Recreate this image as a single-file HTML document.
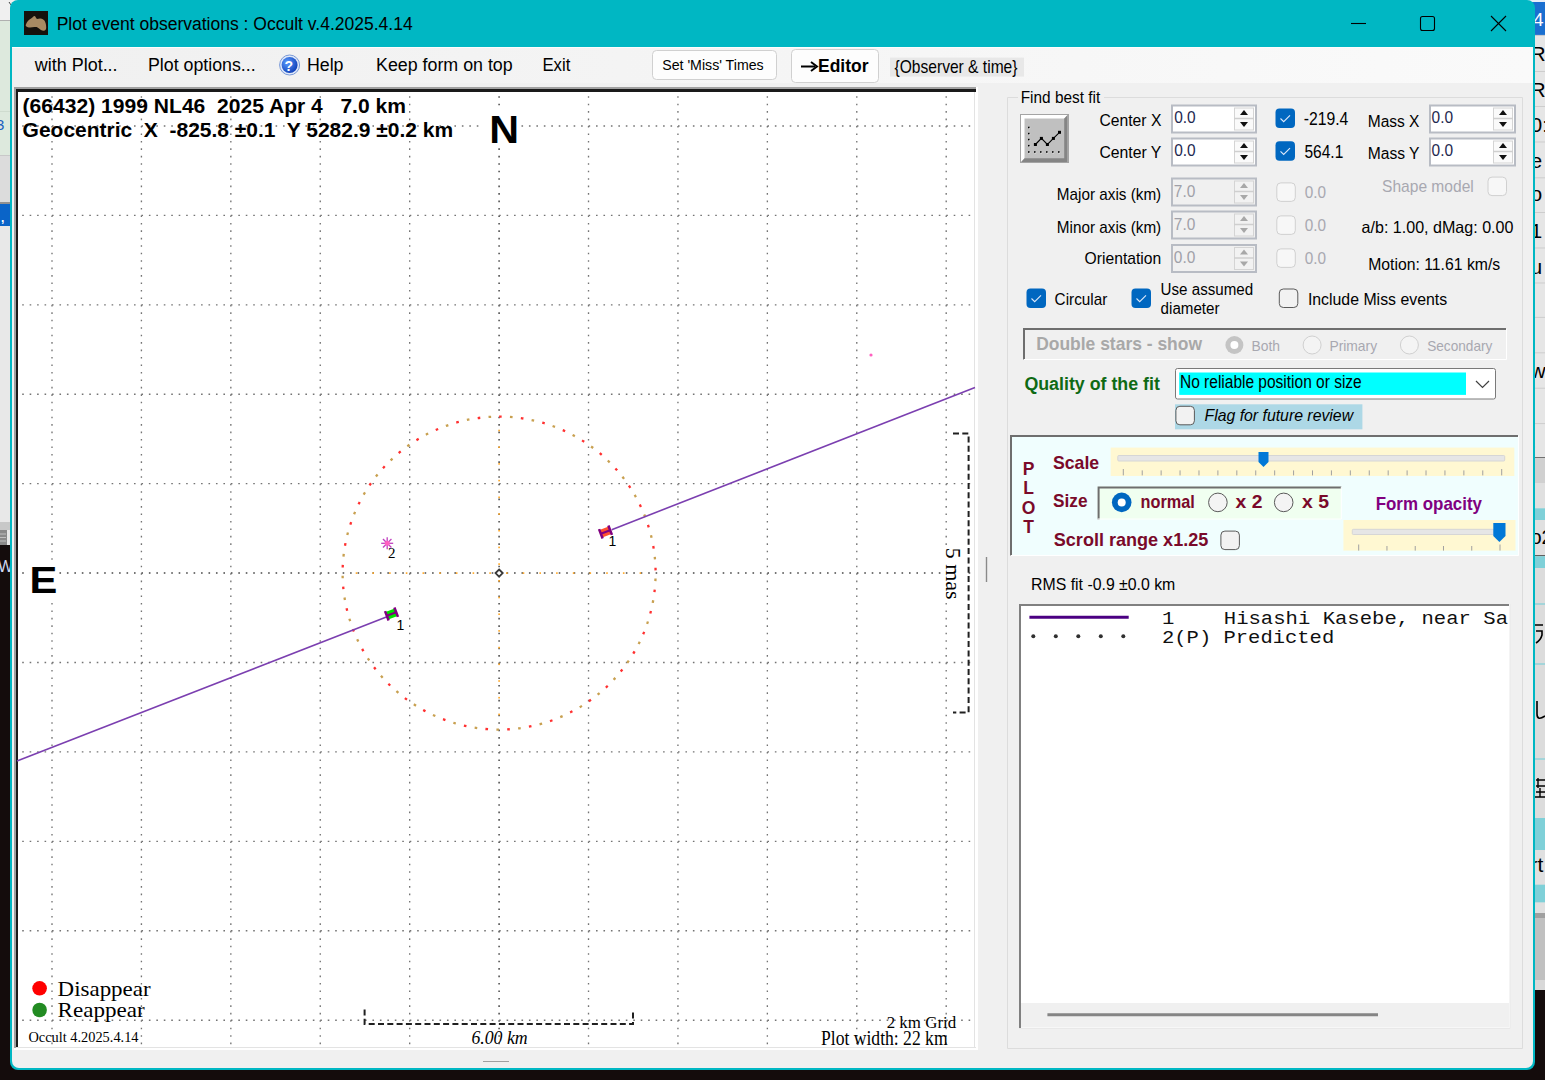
<!DOCTYPE html>
<html><head><meta charset="utf-8"><title>Plot event observations</title>
<style>html,body{margin:0;padding:0;background:#140c0c;}body{width:1545px;height:1080px;overflow:hidden;}svg{display:block;}</style>
</head><body>
<svg width="1545" height="1080" viewBox="0 0 1545 1080" style="white-space:pre">
<rect x="0" y="0" width="1545" height="1080" fill="#140c0c" />
<rect x="0" y="0" width="12" height="545" fill="#e8e8e8" />
<rect x="0" y="0" width="22" height="20" fill="#f0f0f0" />
<line x1="9" y1="2" x2="11" y2="5" stroke="#404040" stroke-width="1" />
<rect x="0" y="20" width="12" height="135" fill="#dde9dd" />
<line x1="0" y1="20.5" x2="12" y2="20.5" stroke="#b0b0b0" stroke-width="1" />
<line x1="0" y1="111.5" x2="12" y2="111.5" stroke="#cfdccf" stroke-width="1" />
<text x="-4" y="130" font-family="'Liberation Sans', sans-serif" font-size="15" font-weight="400" font-style="normal" fill="#2060c0" xml:space="preserve" >3</text>
<rect x="0" y="155" width="12" height="47" fill="#dcdcdc" />
<line x1="0" y1="155.5" x2="12" y2="155.5" stroke="#c8c8c8" stroke-width="1" />
<rect x="0" y="202" width="12" height="2" fill="#909090" />
<rect x="0" y="204" width="12" height="22" fill="#0a64c8" />
<text x="1" y="222" font-family="'Liberation Sans', sans-serif" font-size="12" font-weight="700" font-style="normal" fill="#ffffff" xml:space="preserve" >,</text>
<rect x="0" y="522" width="12" height="8" fill="#c8c8c8" />
<rect x="0" y="530" width="7" height="15" fill="#8a8a8a" />
<line x1="0" y1="534" x2="6" y2="534" stroke="#c0c0c0" stroke-width="1" />
<line x1="0" y1="537.5" x2="6" y2="537.5" stroke="#c0c0c0" stroke-width="1" />
<line x1="0" y1="541" x2="6" y2="541" stroke="#c0c0c0" stroke-width="1" />
<text x="-2" y="572" font-family="'Liberation Sans', sans-serif" font-size="16" font-weight="400" font-style="normal" fill="#d0d8f0" xml:space="preserve" >W</text>
<rect x="1533" y="0" width="12" height="990" fill="#e6e6e6" />
<rect x="1520" y="0" width="25" height="35.4" fill="#1a6fd0" />
<rect x="1520" y="0" width="25" height="2" fill="#e8eef8" />
<text x="1533" y="26.4" font-family="'Liberation Sans', sans-serif" font-size="19" font-weight="400" font-style="normal" fill="#ffffff" xml:space="preserve" >4</text>
<line x1="1533" y1="35.4" x2="1545" y2="35.4" stroke="#cdcdcd" stroke-width="1" />
<line x1="1533" y1="71.5" x2="1545" y2="71.5" stroke="#cdcdcd" stroke-width="1" />
<line x1="1533" y1="106.5" x2="1545" y2="106.5" stroke="#cdcdcd" stroke-width="1" />
<line x1="1533" y1="142" x2="1545" y2="142" stroke="#cdcdcd" stroke-width="1" />
<line x1="1533" y1="177.8" x2="1545" y2="177.8" stroke="#cdcdcd" stroke-width="1" />
<line x1="1533" y1="212.5" x2="1545" y2="212.5" stroke="#cdcdcd" stroke-width="1" />
<line x1="1533" y1="248" x2="1545" y2="248" stroke="#cdcdcd" stroke-width="1" />
<line x1="1533" y1="283" x2="1545" y2="283" stroke="#cdcdcd" stroke-width="1" />
<line x1="1533" y1="317.4" x2="1545" y2="317.4" stroke="#cdcdcd" stroke-width="1" />
<line x1="1533" y1="352.8" x2="1545" y2="352.8" stroke="#cdcdcd" stroke-width="1" />
<line x1="1533" y1="388.2" x2="1545" y2="388.2" stroke="#cdcdcd" stroke-width="1" />
<line x1="1533" y1="423.6" x2="1545" y2="423.6" stroke="#cdcdcd" stroke-width="1" />
<text x="1530.5" y="61" font-family="'Liberation Sans', sans-serif" font-size="21" font-weight="400" font-style="normal" fill="#000" xml:space="preserve" >R5</text>
<text x="1530.5" y="97" font-family="'Liberation Sans', sans-serif" font-size="21" font-weight="400" font-style="normal" fill="#000" xml:space="preserve" >R5</text>
<text x="1530.5" y="132" font-family="'Liberation Sans', sans-serif" font-size="21" font-weight="400" font-style="normal" fill="#000" xml:space="preserve" >0:</text>
<text x="1530.5" y="168" font-family="'Liberation Sans', sans-serif" font-size="21" font-weight="400" font-style="normal" fill="#000" xml:space="preserve" >e</text>
<text x="1530.5" y="201" font-family="'Liberation Sans', sans-serif" font-size="21" font-weight="400" font-style="normal" fill="#000" xml:space="preserve" >o</text>
<text x="1530.5" y="237.5" font-family="'Liberation Sans', sans-serif" font-size="21" font-weight="400" font-style="normal" fill="#000" xml:space="preserve" >1</text>
<text x="1530.5" y="273.6" font-family="'Liberation Sans', sans-serif" font-size="21" font-weight="400" font-style="normal" fill="#000" xml:space="preserve" >u</text>
<text x="1530.5" y="377.8" font-family="'Liberation Sans', sans-serif" font-size="21" font-weight="400" font-style="normal" fill="#000" xml:space="preserve" >w</text>
<text x="1530.5" y="448" font-family="'Liberation Sans', sans-serif" font-size="21" font-weight="400" font-style="normal" fill="#000" xml:space="preserve" >.</text>
<line x1="1533" y1="457.6" x2="1545" y2="457.6" stroke="#707070" stroke-width="1.2" />
<rect x="1533" y="458.2" width="12" height="25" fill="#d0d0d0" />
<rect x="1533" y="483.3" width="12" height="25" fill="#e0e0e0" />
<rect x="1533" y="508.3" width="12" height="11.7" fill="#7fd0d8" />
<rect x="1533" y="520" width="12" height="35" fill="#e0e0e0" />
<text x="1530.5" y="544.4" font-family="'Liberation Sans', sans-serif" font-size="20" font-weight="400" font-style="normal" fill="#000" xml:space="preserve" >o2</text>
<line x1="1533" y1="555.6" x2="1545" y2="555.6" stroke="#606060" stroke-width="1.2" />
<rect x="1533" y="556.2" width="12" height="11.8" fill="#7fd0d8" />
<rect x="1533" y="568" width="12" height="250" fill="#dcdcdc" />
<line x1="1533" y1="604" x2="1545" y2="604" stroke="#7fd0d8" stroke-width="1.2" />
<line x1="1533" y1="664" x2="1545" y2="664" stroke="#7fd0d8" stroke-width="1.2" />
<line x1="1533" y1="759" x2="1545" y2="759" stroke="#7fd0d8" stroke-width="1.2" />
<path d="M1535,625 L1543,625 M1536,631 L1542,631 L1542,635 C1541,639 1539,641 1536,643" fill="none" stroke="#000" stroke-width="1.6"/>
<path d="M1537,701 L1537,714 C1537,719 1540,719.5 1545,716" fill="none" stroke="#000" stroke-width="1.6"/>
<path d="M1536,780 L1545,780 M1536,786 L1545,786 M1538,778 L1538,788 M1536,792 L1545,792 M1540,788 L1540,797 M1535,797 L1545,797" fill="none" stroke="#000" stroke-width="1.4"/>
<rect x="1533" y="818" width="12" height="32" fill="#7fd0d8" />
<rect x="1533" y="850" width="12" height="35" fill="#e0e0e0" />
<text x="1530.5" y="872" font-family="'Liberation Sans', sans-serif" font-size="21" font-weight="400" font-style="normal" fill="#000" xml:space="preserve" >rt</text>
<rect x="1533" y="884.7" width="12" height="18" fill="#7fd0d8" />
<rect x="1533" y="902.5" width="12" height="10.5" fill="#e0e0e0" />
<rect x="1533" y="913" width="12" height="5" fill="#a0a0a0" />
<rect x="1533" y="918" width="12" height="62" fill="#c0c0c0" />
<rect x="1533" y="980" width="12" height="10" fill="#d8d8d8" />
<path d="M10,8 A8,8 0 0 1 18,0 L1527,0 A8,8 0 0 1 1535,8 L1535,1062 A8,8 0 0 1 1527,1070 L18,1070 A8,8 0 0 1 10,1062 Z" fill="#00b7c3"/>
<path d="M12,47 L1533,47 L1533,1061 A7,7 0 0 1 1526,1068 L19,1068 A7,7 0 0 1 12,1061 Z" fill="#f0f0f0"/>
<rect x="24" y="11" width="24" height="24" fill="#15110c" />
<path d="M25.8,24.7 C27,21.5 29,19.8 31.1,18.6 C32.5,17.6 33.5,15.9 34.4,15.9 C35.4,15.9 35.8,17.5 36.7,18.8 C37.6,19.2 38.5,18.6 40,18.4 C42,18.2 43.6,19.4 44.6,20.8 C45.6,22.6 46.2,25 46.2,27.4 C46.2,29.2 45.6,30.6 43.6,30.8 C41.6,30.6 40.2,29.2 39,28.4 C37.8,27.2 36.6,26.6 34.5,27 C32,27.4 29.8,27.6 27.8,27.2 C26.4,26.8 25.4,26 25.8,24.7 Z" fill="#a88a62"/>
<text x="56.7" y="29.6" font-family="'Liberation Sans', sans-serif" font-size="18" font-weight="400" font-style="normal" fill="#000" textLength="356" lengthAdjust="spacingAndGlyphs" xml:space="preserve" >Plot event observations : Occult v.4.2025.4.14</text>
<line x1="1351" y1="23.5" x2="1366" y2="23.5" stroke="#000" stroke-width="1.1" />
<rect x="1420.5" y="16.5" width="14" height="14" fill="none" stroke="#000" stroke-width="1.1" rx="2" />
<line x1="1491" y1="16" x2="1506" y2="31" stroke="#000" stroke-width="1.1" />
<line x1="1506" y1="16" x2="1491" y2="31" stroke="#000" stroke-width="1.1" />
<defs><linearGradient id="mg" x1="0" x2="1" y1="0" y2="0"><stop offset="0" stop-color="#f0f0f0"/><stop offset="1" stop-color="#fafafa"/></linearGradient></defs>
<rect x="12" y="47" width="1521" height="36" fill="url(#mg)" />
<line x1="12" y1="47.5" x2="1533" y2="47.5" stroke="#fdfdfd" stroke-width="1" />
<text x="34.8" y="70.7" font-family="'Liberation Sans', sans-serif" font-size="18" font-weight="400" font-style="normal" fill="#000" textLength="82.8" lengthAdjust="spacingAndGlyphs" xml:space="preserve" >with Plot...</text>
<text x="148" y="70.7" font-family="'Liberation Sans', sans-serif" font-size="18" font-weight="400" font-style="normal" fill="#000" textLength="107.7" lengthAdjust="spacingAndGlyphs" xml:space="preserve" >Plot options...</text>
<circle cx="289.6" cy="65" r="10" fill="#dfe8f8" stroke="#7a9ad8" stroke-width="1"/>
<defs><radialGradient id="hg" cx="0.35" cy="0.35" r="0.7"><stop offset="0" stop-color="#5a9cff"/><stop offset="1" stop-color="#1040b8"/></radialGradient></defs><circle cx="289.6" cy="65" r="8" fill="url(#hg)"/>
<text x="284.5" y="70.5" font-family="'Liberation Sans', sans-serif" font-size="14" font-weight="700" font-style="normal" fill="#fff" xml:space="preserve" >?</text>
<text x="306.9" y="70.9" font-family="'Liberation Sans', sans-serif" font-size="18" font-weight="400" font-style="normal" fill="#000" textLength="36.6" lengthAdjust="spacingAndGlyphs" xml:space="preserve" >Help</text>
<text x="376" y="70.9" font-family="'Liberation Sans', sans-serif" font-size="18" font-weight="400" font-style="normal" fill="#000" textLength="136.7" lengthAdjust="spacingAndGlyphs" xml:space="preserve" >Keep form on top</text>
<text x="542.4" y="70.9" font-family="'Liberation Sans', sans-serif" font-size="18" font-weight="400" font-style="normal" fill="#000" textLength="27.9" lengthAdjust="spacingAndGlyphs" xml:space="preserve" >Exit</text>
<rect x="652.5" y="50.5" width="124" height="29" fill="#fdfdfd" stroke="#d0d0d0" stroke-width="1" rx="4" />
<text x="662.2" y="70.3" font-family="'Liberation Sans', sans-serif" font-size="15.5" font-weight="400" font-style="normal" fill="#000" textLength="101.5" lengthAdjust="spacingAndGlyphs" xml:space="preserve" >Set 'Miss' Times</text>
<rect x="791.5" y="49.5" width="87" height="33" fill="#fdfdfd" stroke="#d0d0d0" stroke-width="1" rx="4" />
<path d="M801,66.5 L815,66.5" stroke="#000" stroke-width="2"/><path d="M811,62 L817,66.5 L811,71" fill="none" stroke="#000" stroke-width="2"/>
<text x="818" y="72.3" font-family="'Liberation Sans', sans-serif" font-size="18.5" font-weight="700" font-style="normal" fill="#000" textLength="50.5" lengthAdjust="spacingAndGlyphs" xml:space="preserve" >Editor</text>
<rect x="890" y="57.6" width="134" height="19" fill="#e8e8e8" />
<text x="894.5" y="73.3" font-family="'Liberation Sans', sans-serif" font-size="17.8" font-weight="400" font-style="normal" fill="#000" textLength="123" lengthAdjust="spacingAndGlyphs" xml:space="preserve" >{Observer &amp; time}</text>
<g id="plot">
<rect x="14" y="87" width="964" height="963" fill="#ffffff" />
<rect x="14" y="87" width="962" height="2" fill="#a0a0a0" />
<rect x="14" y="87" width="2" height="961" fill="#a0a0a0" />
<rect x="16" y="89" width="960" height="3" fill="#1a1a1a" />
<rect x="16" y="89" width="2" height="959" fill="#1a1a1a" />
<line x1="974.5" y1="92" x2="974.5" y2="1048" stroke="#e3e3e3" stroke-width="1" />
<line x1="16" y1="1047.5" x2="976" y2="1047.5" stroke="#e3e3e3" stroke-width="1" />
<line x1="52.00" y1="96.20" x2="52.00" y2="1047" stroke="#747474" stroke-width="1.35" stroke-dasharray="1.6 5.852"/>
<line x1="141.42" y1="96.20" x2="141.42" y2="1047" stroke="#747474" stroke-width="1.35" stroke-dasharray="1.6 5.852"/>
<line x1="230.84" y1="96.20" x2="230.84" y2="1047" stroke="#747474" stroke-width="1.35" stroke-dasharray="1.6 5.852"/>
<line x1="320.26" y1="96.20" x2="320.26" y2="1047" stroke="#747474" stroke-width="1.35" stroke-dasharray="1.6 5.852"/>
<line x1="409.68" y1="96.20" x2="409.68" y2="1047" stroke="#747474" stroke-width="1.35" stroke-dasharray="1.6 5.852"/>
<line x1="499.10" y1="96.20" x2="499.10" y2="1047" stroke="#484848" stroke-width="1.5" stroke-dasharray="1.6 5.852"/>
<line x1="588.52" y1="96.20" x2="588.52" y2="1047" stroke="#747474" stroke-width="1.35" stroke-dasharray="1.6 5.852"/>
<line x1="677.94" y1="96.20" x2="677.94" y2="1047" stroke="#747474" stroke-width="1.35" stroke-dasharray="1.6 5.852"/>
<line x1="767.36" y1="96.20" x2="767.36" y2="1047" stroke="#747474" stroke-width="1.35" stroke-dasharray="1.6 5.852"/>
<line x1="856.78" y1="96.20" x2="856.78" y2="1047" stroke="#747474" stroke-width="1.35" stroke-dasharray="1.6 5.852"/>
<line x1="946.20" y1="96.20" x2="946.20" y2="1047" stroke="#747474" stroke-width="1.35" stroke-dasharray="1.6 5.852"/>
<line x1="22.20" y1="126.00" x2="974" y2="126.00" stroke="#747474" stroke-width="1.35" stroke-dasharray="1.6 5.852"/>
<line x1="22.20" y1="215.42" x2="974" y2="215.42" stroke="#747474" stroke-width="1.35" stroke-dasharray="1.6 5.852"/>
<line x1="22.20" y1="304.84" x2="974" y2="304.84" stroke="#747474" stroke-width="1.35" stroke-dasharray="1.6 5.852"/>
<line x1="22.20" y1="394.26" x2="974" y2="394.26" stroke="#747474" stroke-width="1.35" stroke-dasharray="1.6 5.852"/>
<line x1="22.20" y1="483.68" x2="974" y2="483.68" stroke="#747474" stroke-width="1.35" stroke-dasharray="1.6 5.852"/>
<line x1="22.20" y1="573.10" x2="974" y2="573.10" stroke="#484848" stroke-width="1.5" stroke-dasharray="1.6 5.852"/>
<line x1="22.20" y1="662.52" x2="974" y2="662.52" stroke="#747474" stroke-width="1.35" stroke-dasharray="1.6 5.852"/>
<line x1="22.20" y1="751.94" x2="974" y2="751.94" stroke="#747474" stroke-width="1.35" stroke-dasharray="1.6 5.852"/>
<line x1="22.20" y1="841.36" x2="974" y2="841.36" stroke="#747474" stroke-width="1.35" stroke-dasharray="1.6 5.852"/>
<line x1="22.20" y1="930.78" x2="974" y2="930.78" stroke="#747474" stroke-width="1.35" stroke-dasharray="1.6 5.852"/>
<line x1="22.20" y1="1020.20" x2="974" y2="1020.20" stroke="#747474" stroke-width="1.35" stroke-dasharray="1.6 5.852"/>
<rect x="498.3" y="429.69870000000003" width="1.6" height="1.6" fill="#ffa520" />
<rect x="355.69870000000003" y="572.3000000000001" width="1.6" height="1.6" fill="#ffa520" />
<rect x="498.3" y="446.3987" width="1.6" height="1.6" fill="#ffa520" />
<rect x="372.3987" y="572.3000000000001" width="1.6" height="1.6" fill="#ffa520" />
<rect x="498.3" y="463.0987" width="1.6" height="1.6" fill="#ffa520" />
<rect x="389.0987" y="572.3000000000001" width="1.6" height="1.6" fill="#ffa520" />
<rect x="498.3" y="479.7987" width="1.6" height="1.6" fill="#ffa520" />
<rect x="405.7987" y="572.3000000000001" width="1.6" height="1.6" fill="#ffa520" />
<rect x="498.3" y="496.49870000000004" width="1.6" height="1.6" fill="#ffa520" />
<rect x="422.49870000000004" y="572.3000000000001" width="1.6" height="1.6" fill="#ffa520" />
<rect x="498.3" y="513.1987" width="1.6" height="1.6" fill="#ffa520" />
<rect x="439.19870000000003" y="572.3000000000001" width="1.6" height="1.6" fill="#ffa520" />
<rect x="498.3" y="529.8987000000001" width="1.6" height="1.6" fill="#ffa520" />
<rect x="455.8987" y="572.3000000000001" width="1.6" height="1.6" fill="#ffa520" />
<rect x="498.3" y="546.5987000000001" width="1.6" height="1.6" fill="#ffa520" />
<rect x="472.5987" y="572.3000000000001" width="1.6" height="1.6" fill="#ffa520" />
<rect x="498.3" y="563.2987" width="1.6" height="1.6" fill="#ffa520" />
<rect x="489.2987" y="572.3000000000001" width="1.6" height="1.6" fill="#ffa520" />
<rect x="498.3" y="579.9987000000001" width="1.6" height="1.6" fill="#ffa520" />
<rect x="505.9987" y="572.3000000000001" width="1.6" height="1.6" fill="#ffa520" />
<rect x="498.3" y="596.6987" width="1.6" height="1.6" fill="#ffa520" />
<rect x="522.6987" y="572.3000000000001" width="1.6" height="1.6" fill="#ffa520" />
<rect x="498.3" y="613.3987000000001" width="1.6" height="1.6" fill="#ffa520" />
<rect x="539.3987000000001" y="572.3000000000001" width="1.6" height="1.6" fill="#ffa520" />
<rect x="498.3" y="630.0987" width="1.6" height="1.6" fill="#ffa520" />
<rect x="556.0987" y="572.3000000000001" width="1.6" height="1.6" fill="#ffa520" />
<rect x="498.3" y="646.7987" width="1.6" height="1.6" fill="#ffa520" />
<rect x="572.7987" y="572.3000000000001" width="1.6" height="1.6" fill="#ffa520" />
<rect x="498.3" y="663.4987000000001" width="1.6" height="1.6" fill="#ffa520" />
<rect x="589.4987000000001" y="572.3000000000001" width="1.6" height="1.6" fill="#ffa520" />
<rect x="498.3" y="680.1987" width="1.6" height="1.6" fill="#ffa520" />
<rect x="606.1987" y="572.3000000000001" width="1.6" height="1.6" fill="#ffa520" />
<rect x="498.3" y="696.8987000000001" width="1.6" height="1.6" fill="#ffa520" />
<rect x="622.8987000000001" y="572.3000000000001" width="1.6" height="1.6" fill="#ffa520" />
<rect x="498.3" y="713.5987" width="1.6" height="1.6" fill="#ffa520" />
<rect x="639.5987" y="572.3000000000001" width="1.6" height="1.6" fill="#ffa520" />
<circle cx="499.10" cy="573.10" r="156.5" fill="none" stroke="#ff3030" stroke-width="2.3" stroke-dasharray="2.6 19.25" transform="rotate(-90 499.10 573.10)"/>
<circle cx="499.10" cy="573.10" r="156.5" fill="none" stroke="#c8a050" stroke-width="2.3" stroke-dasharray="2.6 19.25" stroke-dashoffset="-10.9" transform="rotate(-90 499.10 573.10)"/>
<path d="M499.10,569.50 L502.70,573.10 L499.10,576.70 L495.50,573.10 Z" fill="#fff" stroke="#383838" stroke-width="1.8"/>
<line x1="17" y1="761" x2="387" y2="616.7" stroke="#7b3fb0" stroke-width="1.6"/>
<line x1="611.7" y1="529.7" x2="975" y2="387.5" stroke="#7b3fb0" stroke-width="1.6"/>
<g transform="translate(391.5,614) rotate(-21)"><rect x="-5" y="-4" width="10" height="8" fill="#00e000"/><line x1="-5" y1="-5" x2="-5" y2="5" stroke="#800080" stroke-width="2.5"/><line x1="5" y1="-5" x2="5" y2="5" stroke="#800080" stroke-width="2.5"/><line x1="-5" y1="0" x2="5" y2="0" stroke="#800080" stroke-width="2"/></g>
<g transform="translate(605.5,532) rotate(-21)"><rect x="-5" y="-4" width="10" height="8" fill="#ff5030"/><line x1="-5" y1="-5" x2="-5" y2="5" stroke="#800080" stroke-width="2.5"/><line x1="5" y1="-5" x2="5" y2="5" stroke="#800080" stroke-width="2.5"/><line x1="-5" y1="0" x2="5" y2="0" stroke="#800080" stroke-width="2"/></g>
<text x="396.5" y="630" font-family="'Liberation Sans', sans-serif" font-size="14" font-weight="400" font-style="normal" fill="#000" xml:space="preserve" >1</text>
<text x="608.5" y="546" font-family="'Liberation Sans', sans-serif" font-size="14" font-weight="400" font-style="normal" fill="#000" xml:space="preserve" >1</text>
<g transform="translate(387.2,543.3)" stroke="#c040c0" stroke-width="1.3"><line x1="-6.00" y1="-0.00" x2="6.00" y2="0.00"/><line x1="-4.24" y1="-4.24" x2="4.24" y2="4.24"/><line x1="-0.00" y1="-6.00" x2="0.00" y2="6.00"/><line x1="4.24" y1="-4.24" x2="-4.24" y2="4.24"/><circle r="2.5" fill="#ff60c0" stroke="none"/></g>
<text x="388" y="558" font-family="'Liberation Serif', serif" font-size="15" font-weight="400" font-style="normal" fill="#000" xml:space="preserve" >2</text>
<circle cx="871" cy="355" r="1.6" fill="#ff60c0"/>
<text x="22.6" y="113" font-family="'Liberation Sans', sans-serif" font-size="21" font-weight="700" font-style="normal" fill="#000" textLength="383.4" lengthAdjust="spacingAndGlyphs" xml:space="preserve" >(66432) 1999 NL46  2025 Apr 4   7.0 km</text>
<text x="22.6" y="136.6" font-family="'Liberation Sans', sans-serif" font-size="21" font-weight="700" font-style="normal" fill="#000" textLength="430.5" lengthAdjust="spacingAndGlyphs" xml:space="preserve" >Geocentric  X  -825.8 ±0.1  Y 5282.9 ±0.2 km</text>
<rect x="484" y="108" width="33" height="36" fill="#ffffff" />
<text x="489.3" y="142.7" font-family="'Liberation Sans', sans-serif" font-size="38" font-weight="700" font-style="normal" fill="#000" textLength="29.8" lengthAdjust="spacingAndGlyphs" xml:space="preserve" >N</text>
<rect x="25" y="564" width="33" height="33" fill="#ffffff" />
<text x="29.5" y="593" font-family="'Liberation Sans', sans-serif" font-size="37.7" font-weight="700" font-style="normal" fill="#000" textLength="27.8" lengthAdjust="spacingAndGlyphs" xml:space="preserve" >E</text>
<path d="M953,433.5 L968.6,433.5 L968.6,712.5 L953,712.5" fill="none" stroke="#202020" stroke-width="2" stroke-dasharray="6 3.3"/>
<rect x="941" y="545" width="22" height="57" fill="#ffffff" />
<g transform="translate(945.5,547.8) rotate(90)"><text x="0" y="0" font-family="'Liberation Serif', serif" font-size="21" fill="#000" textLength="51.8" lengthAdjust="spacingAndGlyphs">5 mas</text></g>
<path d="M364.6,1009.5 L364.6,1024 L633,1024 L633,1009.5" fill="none" stroke="#202020" stroke-width="2" stroke-dasharray="6 3.3"/>
<text x="471.4" y="1044.4" font-family="'Liberation Serif', serif" font-size="19" font-weight="400" font-style="italic" fill="#000" textLength="56.3" lengthAdjust="spacingAndGlyphs" xml:space="preserve" >6.00 km</text>
<text x="886.7" y="1028.3" font-family="'Liberation Serif', serif" font-size="17.5" font-weight="400" font-style="normal" fill="#000" textLength="69.5" lengthAdjust="spacingAndGlyphs" xml:space="preserve" >2 km Grid</text>
<text x="821" y="1044.9" font-family="'Liberation Serif', serif" font-size="20" font-weight="400" font-style="normal" fill="#000" textLength="126.6" lengthAdjust="spacingAndGlyphs" xml:space="preserve" >Plot width: 22 km</text>
<circle cx="39.6" cy="988.3" r="7.3" fill="#ff0000"/>
<circle cx="39.6" cy="1010" r="7.3" fill="#228b22"/>
<text x="57.6" y="996.4" font-family="'Liberation Serif', serif" font-size="21" font-weight="400" font-style="normal" fill="#000" textLength="93" lengthAdjust="spacingAndGlyphs" xml:space="preserve" >Disappear</text>
<text x="57.6" y="1017.2" font-family="'Liberation Serif', serif" font-size="21" font-weight="400" font-style="normal" fill="#000" textLength="87" lengthAdjust="spacingAndGlyphs" xml:space="preserve" >Reappear</text>
<text x="28.5" y="1042.4" font-family="'Liberation Serif', serif" font-size="15.5" font-weight="400" font-style="normal" fill="#000" textLength="110" lengthAdjust="spacingAndGlyphs" xml:space="preserve" >Occult 4.2025.4.14</text>
</g>
<line x1="986.5" y1="557" x2="986.5" y2="582" stroke="#8a8a8a" stroke-width="1.4" />
<line x1="483" y1="1061.5" x2="509" y2="1061.5" stroke="#a0a0a0" stroke-width="1" />
<path d="M1018,97.5 L1007.5,97.5 L1007.5,1048.5 L1522.5,1048.5 L1522.5,97.5 L1104,97.5" fill="none" stroke="#dcdcdc" stroke-width="1"/>
<text x="1020.7" y="103.4" font-family="'Liberation Sans', sans-serif" font-size="17" font-weight="400" font-style="normal" fill="#000" textLength="79.5" lengthAdjust="spacingAndGlyphs" xml:space="preserve" >Find best fit</text>
<rect x="1020.5" y="114.5" width="48" height="48" fill="#c0c0c0" stroke="#a4a4a4" stroke-width="1" />
<rect x="1021" y="115" width="3.5" height="47" fill="#ffffff" />
<rect x="1021" y="115" width="46" height="3.5" fill="#ffffff" />
<path d="M1067.5,115 L1067.5,162 L1021,162 L1024.5,158.2 L1064.2,158.2 L1064.2,118.6 Z" fill="#858585"/>
<rect x="1028.5" y="127.2" width="1.6" height="1.6" fill="#fff" />
<rect x="1028" y="126.7" width="1.6" height="1.6" fill="#000" />
<rect x="1028.5" y="133.3" width="1.6" height="1.6" fill="#fff" />
<rect x="1028" y="132.8" width="1.6" height="1.6" fill="#000" />
<rect x="1028.5" y="139.3" width="1.6" height="1.6" fill="#fff" />
<rect x="1028" y="138.8" width="1.6" height="1.6" fill="#000" />
<rect x="1028.5" y="145.4" width="1.6" height="1.6" fill="#fff" />
<rect x="1028" y="144.9" width="1.6" height="1.6" fill="#000" />
<rect x="1028.5" y="151.7" width="1.6" height="1.6" fill="#fff" />
<rect x="1028" y="151.2" width="1.6" height="1.6" fill="#000" />
<rect x="1034.5" y="151.7" width="1.6" height="1.6" fill="#fff" />
<rect x="1034" y="151.2" width="1.6" height="1.6" fill="#000" />
<rect x="1040.5" y="151.7" width="1.6" height="1.6" fill="#fff" />
<rect x="1040" y="151.2" width="1.6" height="1.6" fill="#000" />
<rect x="1046.5" y="151.7" width="1.6" height="1.6" fill="#fff" />
<rect x="1046" y="151.2" width="1.6" height="1.6" fill="#000" />
<rect x="1052.5" y="151.7" width="1.6" height="1.6" fill="#fff" />
<rect x="1052" y="151.2" width="1.6" height="1.6" fill="#000" />
<rect x="1058.5" y="151.7" width="1.6" height="1.6" fill="#fff" />
<rect x="1058" y="151.2" width="1.6" height="1.6" fill="#000" />
<polyline points="1035.4,144.5 1041.4,138.4 1047.4,144.5 1053.4,138.4 1059.5,132.3" fill="none" stroke="#000" stroke-width="1.1"/>
<rect x="1033.9" y="143.0" width="3" height="3" fill="#000" />
<rect x="1039.9" y="136.9" width="3" height="3" fill="#000" />
<rect x="1045.9" y="143.0" width="3" height="3" fill="#000" />
<rect x="1051.9" y="136.9" width="3" height="3" fill="#000" />
<rect x="1058.0" y="130.8" width="3" height="3" fill="#000" />
<text x="1099.4" y="126.1" font-family="'Liberation Sans', sans-serif" font-size="17" font-weight="400" font-style="normal" fill="#000" textLength="62" lengthAdjust="spacingAndGlyphs" xml:space="preserve" >Center X</text>
<text x="1099.4" y="158.4" font-family="'Liberation Sans', sans-serif" font-size="17" font-weight="400" font-style="normal" fill="#000" textLength="62" lengthAdjust="spacingAndGlyphs" xml:space="preserve" >Center Y</text>
<rect x="1172" y="105.5" width="84" height="27" fill="#ffffff" stroke="#b8bcc4" stroke-width="2" />
<rect x="1234.5" y="108.0" width="19" height="22" fill="#fafafa" stroke="#d4d4d4" stroke-width="1" />
<line x1="1234" y1="118.5" x2="1254" y2="118.5" stroke="#cfcfcf" stroke-width="1.5" />
<path d="M1240,115.0 L1248,115.0 L1244,110.0 Z" fill="#111"/>
<path d="M1240,122.0 L1248,122.0 L1244,127.0 Z" fill="#111"/>
<text x="1174.2" y="123.1" font-family="'Liberation Sans', sans-serif" font-size="17" font-weight="400" font-style="normal" fill="#1e2850" textLength="21.5" lengthAdjust="spacingAndGlyphs" xml:space="preserve" >0.0</text>
<rect x="1172" y="138.5" width="84" height="27" fill="#ffffff" stroke="#b8bcc4" stroke-width="2" />
<rect x="1234.5" y="141.0" width="19" height="22" fill="#fafafa" stroke="#d4d4d4" stroke-width="1" />
<line x1="1234" y1="151.5" x2="1254" y2="151.5" stroke="#cfcfcf" stroke-width="1.5" />
<path d="M1240,148.0 L1248,148.0 L1244,143.0 Z" fill="#111"/>
<path d="M1240,155.0 L1248,155.0 L1244,160.0 Z" fill="#111"/>
<text x="1174.2" y="155.8" font-family="'Liberation Sans', sans-serif" font-size="17" font-weight="400" font-style="normal" fill="#1e2850" textLength="21.5" lengthAdjust="spacingAndGlyphs" xml:space="preserve" >0.0</text>
<rect x="1275.5" y="108.5" width="19.5" height="19.5" fill="#0067c0" rx="4" />
<path d="M1280.5,118.5 L1283.7,121.7 L1290.0,115.3" fill="none" stroke="#dce8fa" stroke-width="1.1"/>
<rect x="1275.5" y="141.3" width="19.5" height="19.5" fill="#0067c0" rx="4" />
<path d="M1280.5,151.3 L1283.7,154.5 L1290.0,148.10000000000002" fill="none" stroke="#dce8fa" stroke-width="1.1"/>
<text x="1303.7" y="125.3" font-family="'Liberation Sans', sans-serif" font-size="17.5" font-weight="400" font-style="normal" fill="#000" textLength="44.6" lengthAdjust="spacingAndGlyphs" xml:space="preserve" >-219.4</text>
<text x="1304.5" y="158.1" font-family="'Liberation Sans', sans-serif" font-size="17.5" font-weight="400" font-style="normal" fill="#000" textLength="38.8" lengthAdjust="spacingAndGlyphs" xml:space="preserve" >564.1</text>
<text x="1367.7" y="126.6" font-family="'Liberation Sans', sans-serif" font-size="16" font-weight="400" font-style="normal" fill="#000" textLength="51.8" lengthAdjust="spacingAndGlyphs" xml:space="preserve" >Mass X</text>
<text x="1367.7" y="158.8" font-family="'Liberation Sans', sans-serif" font-size="16" font-weight="400" font-style="normal" fill="#000" textLength="51.8" lengthAdjust="spacingAndGlyphs" xml:space="preserve" >Mass Y</text>
<rect x="1430" y="105.5" width="85" height="27" fill="#ffffff" stroke="#b8bcc4" stroke-width="2" />
<rect x="1493.5" y="108.0" width="19" height="22" fill="#fafafa" stroke="#d4d4d4" stroke-width="1" />
<line x1="1493" y1="118.5" x2="1513" y2="118.5" stroke="#cfcfcf" stroke-width="1.5" />
<path d="M1499,115.0 L1507,115.0 L1503,110.0 Z" fill="#111"/>
<path d="M1499,122.0 L1507,122.0 L1503,127.0 Z" fill="#111"/>
<text x="1431.6" y="122.8" font-family="'Liberation Sans', sans-serif" font-size="17" font-weight="400" font-style="normal" fill="#1e2850" textLength="21.5" lengthAdjust="spacingAndGlyphs" xml:space="preserve" >0.0</text>
<rect x="1430" y="138.5" width="85" height="27" fill="#ffffff" stroke="#b8bcc4" stroke-width="2" />
<rect x="1493.5" y="141.0" width="19" height="22" fill="#fafafa" stroke="#d4d4d4" stroke-width="1" />
<line x1="1493" y1="151.5" x2="1513" y2="151.5" stroke="#cfcfcf" stroke-width="1.5" />
<path d="M1499,148.0 L1507,148.0 L1503,143.0 Z" fill="#111"/>
<path d="M1499,155.0 L1507,155.0 L1503,160.0 Z" fill="#111"/>
<text x="1431.6" y="155.6" font-family="'Liberation Sans', sans-serif" font-size="17" font-weight="400" font-style="normal" fill="#1e2850" textLength="21.5" lengthAdjust="spacingAndGlyphs" xml:space="preserve" >0.0</text>
<text x="1056.8" y="200.3" font-family="'Liberation Sans', sans-serif" font-size="17" font-weight="400" font-style="normal" fill="#000" textLength="104.4" lengthAdjust="spacingAndGlyphs" xml:space="preserve" >Major axis (km)</text>
<text x="1056.8" y="233.1" font-family="'Liberation Sans', sans-serif" font-size="17" font-weight="400" font-style="normal" fill="#000" textLength="104.4" lengthAdjust="spacingAndGlyphs" xml:space="preserve" >Minor axis (km)</text>
<text x="1084.6" y="264.2" font-family="'Liberation Sans', sans-serif" font-size="17" font-weight="400" font-style="normal" fill="#000" textLength="76.6" lengthAdjust="spacingAndGlyphs" xml:space="preserve" >Orientation</text>
<rect x="1172" y="178.5" width="84" height="27" fill="#f0f0f0" stroke="#b8bcc4" stroke-width="2" />
<rect x="1234.5" y="181.0" width="19" height="22" fill="#f2f2f2" stroke="#d4d4d4" stroke-width="1" />
<line x1="1234" y1="191.5" x2="1254" y2="191.5" stroke="#cfcfcf" stroke-width="1.5" />
<path d="M1240,188.0 L1248,188.0 L1244,183.0 Z" fill="#a8a8a8"/>
<path d="M1240,195.0 L1248,195.0 L1244,200.0 Z" fill="#a8a8a8"/>
<text x="1173.8" y="196.9" font-family="'Liberation Sans', sans-serif" font-size="17" font-weight="400" font-style="normal" fill="#a0a0a8" textLength="21.5" lengthAdjust="spacingAndGlyphs" xml:space="preserve" >7.0</text>
<rect x="1172" y="211.5" width="84" height="27" fill="#f0f0f0" stroke="#b8bcc4" stroke-width="2" />
<rect x="1234.5" y="214.0" width="19" height="22" fill="#f2f2f2" stroke="#d4d4d4" stroke-width="1" />
<line x1="1234" y1="224.5" x2="1254" y2="224.5" stroke="#cfcfcf" stroke-width="1.5" />
<path d="M1240,221.0 L1248,221.0 L1244,216.0 Z" fill="#a8a8a8"/>
<path d="M1240,228.0 L1248,228.0 L1244,233.0 Z" fill="#a8a8a8"/>
<text x="1173.8" y="229.7" font-family="'Liberation Sans', sans-serif" font-size="17" font-weight="400" font-style="normal" fill="#a0a0a8" textLength="21.5" lengthAdjust="spacingAndGlyphs" xml:space="preserve" >7.0</text>
<rect x="1172" y="245" width="84" height="27" fill="#f0f0f0" stroke="#b8bcc4" stroke-width="2" />
<rect x="1234.5" y="247.5" width="19" height="22" fill="#f2f2f2" stroke="#d4d4d4" stroke-width="1" />
<line x1="1234" y1="258.0" x2="1254" y2="258.0" stroke="#cfcfcf" stroke-width="1.5" />
<path d="M1240,254.5 L1248,254.5 L1244,249.5 Z" fill="#a8a8a8"/>
<path d="M1240,261.5 L1248,261.5 L1244,266.5 Z" fill="#a8a8a8"/>
<text x="1173.8" y="262.6" font-family="'Liberation Sans', sans-serif" font-size="17" font-weight="400" font-style="normal" fill="#a0a0a8" textLength="21.5" lengthAdjust="spacingAndGlyphs" xml:space="preserve" >0.0</text>
<rect x="1276.8" y="182.9" width="18.5" height="18.5" fill="#f7f7f7" stroke="#d0d0d0" stroke-width="1" rx="4" />
<text x="1304.7" y="198" font-family="'Liberation Sans', sans-serif" font-size="17" font-weight="400" font-style="normal" fill="#a8a8b0" textLength="21.3" lengthAdjust="spacingAndGlyphs" xml:space="preserve" >0.0</text>
<rect x="1276.8" y="215.9" width="18.5" height="18.5" fill="#f7f7f7" stroke="#d0d0d0" stroke-width="1" rx="4" />
<text x="1304.7" y="231" font-family="'Liberation Sans', sans-serif" font-size="17" font-weight="400" font-style="normal" fill="#a8a8b0" textLength="21.3" lengthAdjust="spacingAndGlyphs" xml:space="preserve" >0.0</text>
<rect x="1276.8" y="248.9" width="18.5" height="18.5" fill="#f7f7f7" stroke="#d0d0d0" stroke-width="1" rx="4" />
<text x="1304.7" y="264.1" font-family="'Liberation Sans', sans-serif" font-size="17" font-weight="400" font-style="normal" fill="#a8a8b0" textLength="21.3" lengthAdjust="spacingAndGlyphs" xml:space="preserve" >0.0</text>
<text x="1382" y="192.3" font-family="'Liberation Sans', sans-serif" font-size="17" font-weight="400" font-style="normal" fill="#a8a8b0" textLength="91.8" lengthAdjust="spacingAndGlyphs" xml:space="preserve" >Shape model</text>
<rect x="1488.0" y="177.1" width="18.5" height="18.5" fill="#f7f7f7" stroke="#d0d0d0" stroke-width="1" rx="4" />
<text x="1361.6" y="232.7" font-family="'Liberation Sans', sans-serif" font-size="16.5" font-weight="400" font-style="normal" fill="#000" textLength="151.8" lengthAdjust="spacingAndGlyphs" xml:space="preserve" >a/b: 1.00, dMag: 0.00</text>
<text x="1368.2" y="269.8" font-family="'Liberation Sans', sans-serif" font-size="16.5" font-weight="400" font-style="normal" fill="#000" textLength="132" lengthAdjust="spacingAndGlyphs" xml:space="preserve" >Motion: 11.61 km/s</text>
<rect x="1026.5" y="288.5" width="19.5" height="19.5" fill="#0067c0" rx="4" />
<path d="M1031.5,298.5 L1034.7,301.7 L1041.0,295.3" fill="none" stroke="#dce8fa" stroke-width="1.1"/>
<text x="1054.6" y="305.3" font-family="'Liberation Sans', sans-serif" font-size="17" font-weight="400" font-style="normal" fill="#000" textLength="52.7" lengthAdjust="spacingAndGlyphs" xml:space="preserve" >Circular</text>
<rect x="1131.5" y="288.5" width="19.5" height="19.5" fill="#0067c0" rx="4" />
<path d="M1136.5,298.5 L1139.7,301.7 L1146.0,295.3" fill="none" stroke="#dce8fa" stroke-width="1.1"/>
<text x="1160.6" y="294.9" font-family="'Liberation Sans', sans-serif" font-size="16" font-weight="400" font-style="normal" fill="#000" textLength="92.6" lengthAdjust="spacingAndGlyphs" xml:space="preserve" >Use assumed</text>
<text x="1160.6" y="313.7" font-family="'Liberation Sans', sans-serif" font-size="16" font-weight="400" font-style="normal" fill="#000" textLength="58.9" lengthAdjust="spacingAndGlyphs" xml:space="preserve" >diameter</text>
<rect x="1279.3" y="289.0" width="18.5" height="18.5" fill="#f2f2f2" stroke="#5a5a5a" stroke-width="1" rx="4" />
<text x="1307.9" y="305.3" font-family="'Liberation Sans', sans-serif" font-size="17" font-weight="400" font-style="normal" fill="#000" textLength="139.2" lengthAdjust="spacingAndGlyphs" xml:space="preserve" >Include Miss events</text>
<rect x="1023.5" y="328" width="483" height="32" fill="#f0f0f0" />
<path d="M1024,360 L1024,329 L1506,329" fill="none" stroke="#6e6e6e" stroke-width="2"/>
<path d="M1023.5,359.5 L1506.5,359.5 L1506.5,329" fill="none" stroke="#ffffff" stroke-width="1"/>
<text x="1036.2" y="350.3" font-family="'Liberation Sans', sans-serif" font-size="18.5" font-weight="700" font-style="normal" fill="#a8a8a8" textLength="165.8" lengthAdjust="spacingAndGlyphs" xml:space="preserve" >Double stars - show</text>
<circle cx="1234.4" cy="345" r="9" fill="#c4c4c4"/><circle cx="1234.4" cy="345" r="4" fill="#fff"/>
<text x="1251.5" y="351.3" font-family="'Liberation Sans', sans-serif" font-size="14.5" font-weight="400" font-style="normal" fill="#a8a8b0" textLength="28.5" lengthAdjust="spacingAndGlyphs" xml:space="preserve" >Both</text>
<circle cx="1312.1" cy="345" r="9" fill="#f4f4f4" stroke="#d0d0d0" stroke-width="1"/>
<text x="1329.4" y="351.3" font-family="'Liberation Sans', sans-serif" font-size="14.5" font-weight="400" font-style="normal" fill="#a8a8b0" textLength="47.7" lengthAdjust="spacingAndGlyphs" xml:space="preserve" >Primary</text>
<circle cx="1409.4" cy="345" r="9" fill="#f4f4f4" stroke="#d0d0d0" stroke-width="1"/>
<text x="1427.2" y="351.3" font-family="'Liberation Sans', sans-serif" font-size="14.5" font-weight="400" font-style="normal" fill="#a8a8b0" textLength="65.2" lengthAdjust="spacingAndGlyphs" xml:space="preserve" >Secondary</text>
<text x="1024.4" y="389.8" font-family="'Liberation Sans', sans-serif" font-size="17.5" font-weight="700" font-style="normal" fill="#0f6a14" textLength="135.5" lengthAdjust="spacingAndGlyphs" xml:space="preserve" >Quality of the fit</text>
<rect x="1175.5" y="368.5" width="320" height="30.5" fill="#ffffff" stroke="#7a7a7a" stroke-width="1" rx="2" />
<rect x="1179.2" y="372.5" width="286.8" height="22.4" fill="#00ffff" />
<text x="1180" y="388.2" font-family="'Liberation Sans', sans-serif" font-size="17.5" font-weight="400" font-style="normal" fill="#000" textLength="181.7" lengthAdjust="spacingAndGlyphs" xml:space="preserve" >No reliable position or size</text>
<path d="M1476,381 L1482.5,387.5 L1489,381" fill="none" stroke="#404040" stroke-width="1.2"/>
<rect x="1175" y="404.3" width="187.4" height="25" fill="#add8e6" />
<rect x="1175.9" y="406.3" width="18.5" height="18.5" fill="#f2f2f2" stroke="#5a5a5a" stroke-width="1" rx="4" />
<text x="1204.5" y="421.3" font-family="'Liberation Sans', sans-serif" font-size="17" font-weight="400" font-style="italic" fill="#000" textLength="148.6" lengthAdjust="spacingAndGlyphs" xml:space="preserve" >Flag for future review</text>
<rect x="1010" y="435" width="508.5" height="121" fill="#f0fefe" />
<path d="M1011,556 L1011,436 L1518,436" fill="none" stroke="#6e6e6e" stroke-width="2"/>
<path d="M1010.5,555.5 L1518.5,555.5 L1518.5,436" fill="none" stroke="#ffffff" stroke-width="1"/>
<text x="1028.5" y="474.6" font-family="'Liberation Sans', sans-serif" font-size="17.5" font-weight="700" font-style="normal" fill="#7a0a2a" xml:space="preserve" text-anchor="middle">P</text>
<text x="1028.5" y="494.20000000000005" font-family="'Liberation Sans', sans-serif" font-size="17.5" font-weight="700" font-style="normal" fill="#7a0a2a" xml:space="preserve" text-anchor="middle">L</text>
<text x="1028.5" y="513.8000000000001" font-family="'Liberation Sans', sans-serif" font-size="17.5" font-weight="700" font-style="normal" fill="#7a0a2a" xml:space="preserve" text-anchor="middle">O</text>
<text x="1028.5" y="533.4" font-family="'Liberation Sans', sans-serif" font-size="17.5" font-weight="700" font-style="normal" fill="#7a0a2a" xml:space="preserve" text-anchor="middle">T</text>
<text x="1053" y="468.7" font-family="'Liberation Sans', sans-serif" font-size="18.5" font-weight="700" font-style="normal" fill="#7a0a2a" textLength="46.2" lengthAdjust="spacingAndGlyphs" xml:space="preserve" >Scale</text>
<rect x="1110.7" y="447.6" width="403.6" height="28.4" fill="#fff8d2" />
<rect x="1117.8" y="455.5" width="386.9" height="5.5" fill="#e6e6e6" stroke="#d6d6d6" stroke-width="1" rx="1" />
<line x1="1123.3" y1="469" x2="1123.3" y2="475.4" stroke="#a0a0a0" stroke-width="1" />
<line x1="1142.22" y1="470.4" x2="1142.22" y2="475.4" stroke="#a0a0a0" stroke-width="1" />
<line x1="1161.1399999999999" y1="470.4" x2="1161.1399999999999" y2="475.4" stroke="#a0a0a0" stroke-width="1" />
<line x1="1180.06" y1="470.4" x2="1180.06" y2="475.4" stroke="#a0a0a0" stroke-width="1" />
<line x1="1198.98" y1="470.4" x2="1198.98" y2="475.4" stroke="#a0a0a0" stroke-width="1" />
<line x1="1217.8999999999999" y1="470.4" x2="1217.8999999999999" y2="475.4" stroke="#a0a0a0" stroke-width="1" />
<line x1="1236.82" y1="470.4" x2="1236.82" y2="475.4" stroke="#a0a0a0" stroke-width="1" />
<line x1="1255.74" y1="470.4" x2="1255.74" y2="475.4" stroke="#a0a0a0" stroke-width="1" />
<line x1="1274.6599999999999" y1="470.4" x2="1274.6599999999999" y2="475.4" stroke="#a0a0a0" stroke-width="1" />
<line x1="1293.58" y1="470.4" x2="1293.58" y2="475.4" stroke="#a0a0a0" stroke-width="1" />
<line x1="1312.5" y1="470.4" x2="1312.5" y2="475.4" stroke="#a0a0a0" stroke-width="1" />
<line x1="1331.42" y1="470.4" x2="1331.42" y2="475.4" stroke="#a0a0a0" stroke-width="1" />
<line x1="1350.34" y1="470.4" x2="1350.34" y2="475.4" stroke="#a0a0a0" stroke-width="1" />
<line x1="1369.26" y1="470.4" x2="1369.26" y2="475.4" stroke="#a0a0a0" stroke-width="1" />
<line x1="1388.1799999999998" y1="470.4" x2="1388.1799999999998" y2="475.4" stroke="#a0a0a0" stroke-width="1" />
<line x1="1407.1" y1="470.4" x2="1407.1" y2="475.4" stroke="#a0a0a0" stroke-width="1" />
<line x1="1426.02" y1="470.4" x2="1426.02" y2="475.4" stroke="#a0a0a0" stroke-width="1" />
<line x1="1444.94" y1="470.4" x2="1444.94" y2="475.4" stroke="#a0a0a0" stroke-width="1" />
<line x1="1463.8600000000001" y1="470.4" x2="1463.8600000000001" y2="475.4" stroke="#a0a0a0" stroke-width="1" />
<line x1="1482.78" y1="470.4" x2="1482.78" y2="475.4" stroke="#a0a0a0" stroke-width="1" />
<line x1="1501.7" y1="469" x2="1501.7" y2="475.4" stroke="#a0a0a0" stroke-width="1" />
<path d="M1258.5,452 L1268.5,452 L1268.5,462 L1263.5,467 L1258.5,462 Z" fill="#0078d7"/>
<text x="1053" y="507.4" font-family="'Liberation Sans', sans-serif" font-size="18.5" font-weight="700" font-style="normal" fill="#7a0a2a" textLength="34.5" lengthAdjust="spacingAndGlyphs" xml:space="preserve" >Size</text>
<rect x="1097.6" y="486.4" width="243.7" height="33" fill="#f0fff0" />
<path d="M1098.6,519.4 L1098.6,487.4 L1341.3,487.4" fill="none" stroke="#6e6e6e" stroke-width="2"/>
<path d="M1097.6,519 L1341.3,519 L1341.3,487" fill="none" stroke="#ffffff" stroke-width="1"/>
<circle cx="1121.7" cy="502.4" r="9.8" fill="#0067c0"/><circle cx="1121.7" cy="502.4" r="4" fill="#fff"/>
<text x="1140.5" y="508.3" font-family="'Liberation Sans', sans-serif" font-size="18.5" font-weight="700" font-style="normal" fill="#7a0a2a" textLength="54.3" lengthAdjust="spacingAndGlyphs" xml:space="preserve" >normal</text>
<circle cx="1217.9" cy="502.4" r="9.3" fill="#f4f4f4" stroke="#5a5a5a" stroke-width="1"/>
<text x="1235.6" y="508.3" font-family="'Liberation Sans', sans-serif" font-size="18.5" font-weight="700" font-style="normal" fill="#7a0a2a" textLength="26.9" lengthAdjust="spacingAndGlyphs" xml:space="preserve" >x 2</text>
<circle cx="1283.7" cy="502.4" r="9.3" fill="#f4f4f4" stroke="#5a5a5a" stroke-width="1"/>
<text x="1302" y="508.3" font-family="'Liberation Sans', sans-serif" font-size="18.5" font-weight="700" font-style="normal" fill="#7a0a2a" textLength="27" lengthAdjust="spacingAndGlyphs" xml:space="preserve" >x 5</text>
<text x="1375.7" y="509.5" font-family="'Liberation Sans', sans-serif" font-size="18.5" font-weight="700" font-style="normal" fill="#800080" textLength="106.3" lengthAdjust="spacingAndGlyphs" xml:space="preserve" >Form opacity</text>
<rect x="1343.4" y="520" width="172.1" height="30.6" fill="#fff8d2" />
<rect x="1352.3" y="529.3" width="141.7" height="5.2" fill="#e6e6e6" stroke="#d6d6d6" stroke-width="1" rx="1" />
<line x1="1358.7" y1="544.5" x2="1358.7" y2="550.6" stroke="#a0a0a0" stroke-width="1" />
<line x1="1386.96" y1="546" x2="1386.96" y2="550.6" stroke="#a0a0a0" stroke-width="1" />
<line x1="1415.22" y1="546" x2="1415.22" y2="550.6" stroke="#a0a0a0" stroke-width="1" />
<line x1="1443.48" y1="546" x2="1443.48" y2="550.6" stroke="#a0a0a0" stroke-width="1" />
<line x1="1471.74" y1="546" x2="1471.74" y2="550.6" stroke="#a0a0a0" stroke-width="1" />
<line x1="1500.0" y1="544.5" x2="1500.0" y2="550.6" stroke="#a0a0a0" stroke-width="1" />
<path d="M1493.3,523 L1505.5,523 L1505.5,536 L1499.4,542 L1493.3,536 Z" fill="#0078d7"/>
<text x="1053.8" y="546.1" font-family="'Liberation Sans', sans-serif" font-size="18.5" font-weight="700" font-style="normal" fill="#7a0a2a" textLength="154.5" lengthAdjust="spacingAndGlyphs" xml:space="preserve" >Scroll range x1.25</text>
<rect x="1220.9" y="531.1" width="18.5" height="18.5" fill="#f2f2f2" stroke="#5a5a5a" stroke-width="1" rx="4" />
<text x="1031.1" y="590" font-family="'Liberation Sans', sans-serif" font-size="17" font-weight="400" font-style="normal" fill="#000" textLength="144.2" lengthAdjust="spacingAndGlyphs" xml:space="preserve" >RMS fit -0.9 ±0.0 km</text>
<rect x="1019" y="604" width="491" height="425" fill="#ffffff" />
<path d="M1020,1028 L1020,605 L1509,605" fill="none" stroke="#808080" stroke-width="2"/>
<path d="M1019,1028.5 L1510,1028.5 L1510,604" fill="none" stroke="#e8e8e8" stroke-width="1"/>
<rect x="1021" y="1003" width="488" height="24.5" fill="#f0f0f0" />
<line x1="1047.4" y1="1014.7" x2="1378" y2="1014.7" stroke="#858585" stroke-width="3" />
<line x1="1029.4" y1="617.3" x2="1128.7" y2="617.3" stroke="#4b0082" stroke-width="3" />
<circle cx="1033.3" cy="636.3" r="2" fill="#303030"/>
<circle cx="1055.8" cy="636.3" r="2" fill="#303030"/>
<circle cx="1078.3" cy="636.3" r="2" fill="#303030"/>
<circle cx="1100.8" cy="636.3" r="2" fill="#303030"/>
<circle cx="1123.3" cy="636.3" r="2" fill="#303030"/>
<text x="1162" y="624.3" font-family="'Liberation Mono', monospace" font-size="18.5" font-weight="400" font-style="normal" fill="#101010" textLength="346" lengthAdjust="spacingAndGlyphs" xml:space="preserve" >1    Hisashi Kasebe, near Sa</text>
<text x="1162" y="642.5" font-family="'Liberation Mono', monospace" font-size="18.5" font-weight="400" font-style="normal" fill="#101010" textLength="172.2" lengthAdjust="spacingAndGlyphs" xml:space="preserve" >2(P) Predicted</text>
</svg>
</body></html>
